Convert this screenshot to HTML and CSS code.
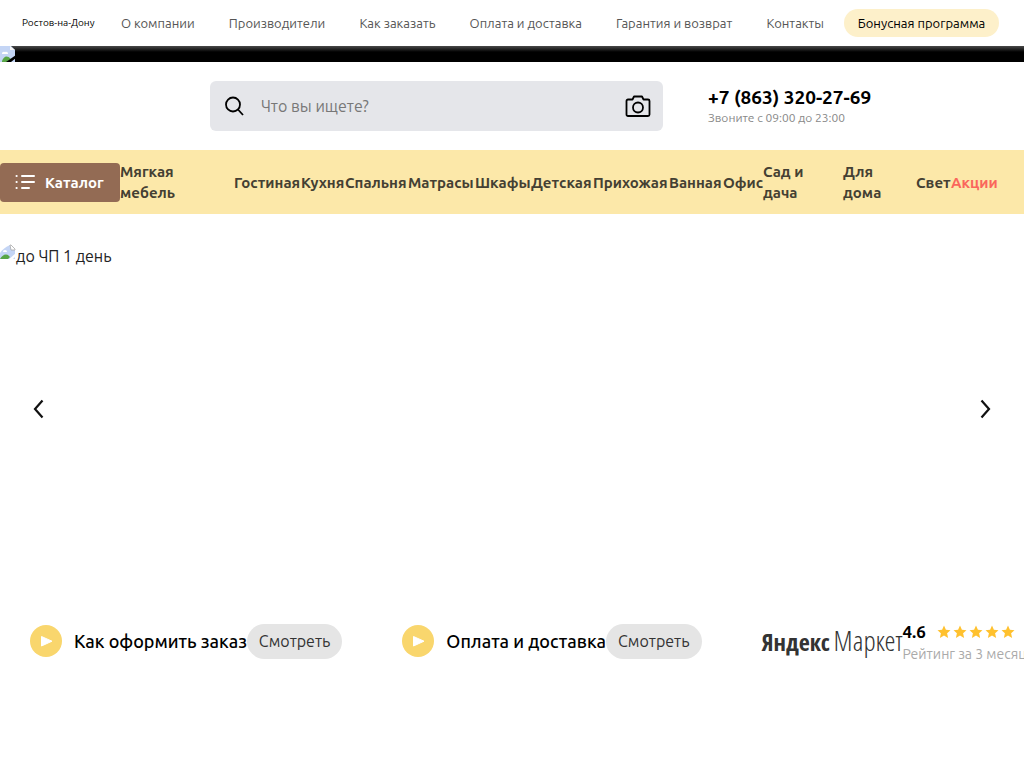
FILE: index.html
```html
<!DOCTYPE html>
<html lang="ru">
<head>
<meta charset="utf-8">
<meta name="viewport" content="width=device-width, initial-scale=1">
<title>Мебель — Ростов-на-Дону</title>
<link rel="stylesheet" href="styles.css">
</head>
<body>
<header>
  <div class="topbar">
    <a class="city" href="#">Ростов-на-Дону</a>
    <nav class="toplinks">
      <a href="#">О компании</a>
      <a href="#">Производители</a>
      <a href="#">Как заказать</a>
      <a href="#">Оплата и доставка</a>
      <a href="#">Гарантия и возврат</a>
      <a href="#">Контакты</a>
    </nav>
    <a class="bonus" href="#">Бонусная программа</a>
  </div>
  <div class="promo">
    <svg class="broken" viewBox="0 0 16 16" aria-hidden="true"><path fill="#c4d5f5" d="M0 0h11l4 4v12H0z"/><path fill="#fff" d="M2 8a2 2 0 0 1 3-2 2 2 0 0 1 3 2z"/><path fill="#58a646" d="M2 15c2-5 5-6 9-2l-4 3H2z"/><path fill="#f5f5f5" d="M10 0l5 4h-5z"/><path fill="#000" d="M6 16L16 9v3l-5 4z"/></svg>
  </div>
  <div class="head">
    <form class="search">
      <button class="iconbtn" type="button" aria-label="Найти"><svg width="20" height="20" viewBox="0 0 20 20" fill="none" stroke="#000" stroke-width="1.800"><circle cx="8" cy="8.500" r="7"/><path d="M13 13.500l5 5.500"/></svg></button>
      <input type="text" placeholder="Что вы ищете?" aria-label="Поиск">
      <button class="iconbtn" type="button" aria-label="Поиск по фото"><svg width="26" height="22" viewBox="0 0 26 22" fill="none" stroke="#000" stroke-width="1.800" stroke-linejoin="round"><path d="M3 4.500h4.500L9 1.500h8l1.500 3H23a1.500 1.500 0 0 1 1.500 1.500V19.500a1.500 1.500 0 0 1-1.500 1.500H3a1.500 1.500 0 0 1-1.500-1.500V6A1.500 1.500 0 0 1 3 4.500z"/><circle cx="13" cy="12.500" r="5"/></svg></button>
    </form>
    <div class="phone">
      <a href="tel:+78633202769">+7 (863) 320-27-69</a>
      <p>Звоните с 09:00 до 23:00</p>
    </div>
  </div>
  <nav class="menu">
    <button class="catalog" type="button"><svg width="20" height="16" viewBox="0 0 20 16" stroke="#fff" stroke-width="2" stroke-linecap="round"><path d="M1.500 2h.2M1.500 8h.2M1.500 14h.2M7 2h12M7 8h12M7 14h7"/></svg>Каталог</button>
    <a class="wraps" href="#">Мягкая мебель</a>
    <a href="#">Гостиная</a>
    <a href="#">Кухня</a>
    <a href="#">Спальня</a>
    <a href="#">Матрасы</a>
    <a href="#">Шкафы</a>
    <a href="#">Детская</a>
    <a href="#">Прихожая</a>
    <a href="#">Ванная</a>
    <a href="#">Офис</a>
    <a class="wraps" href="#">Сад и дача</a>
    <a class="wraps" href="#">Для дома</a>
    <a href="#">Свет</a>
    <a class="sale" href="#">Акции</a>
  </nav>
</header>
<main>
  <section class="slider">
    <a class="slide" href="#"><svg class="broken" viewBox="0 0 16 16" aria-hidden="true"><path fill="#c4d5f5" d="M0 9C2 6 5 3 10 1l5 5v9H0z"/><path fill="#fff" stroke="#aaa" stroke-width=".8" d="M10 1h1l4 4v1h-4z"/><path fill="#fff" d="M3 8a2 2 0 0 1 4 0z"/><path fill="#58a646" d="M0 15c3-5 7-6 10-2l-2 2z"/><path fill="#fff" d="M8 16l8-7v3l-4 4z"/></svg>до ЧП 1 день</a>
    <div class="arrows">
      <button type="button" aria-label="Назад"><svg width="12" height="20" viewBox="0 0 12 20" fill="none" stroke="#111" stroke-width="2.200"><path d="M10.500 1.500L3 10l7.500 8.500"/></svg></button>
      <button type="button" aria-label="Вперёд"><svg width="12" height="20" viewBox="0 0 12 20" fill="none" stroke="#111" stroke-width="2.200"><path d="M1.500 1.500L9 10l-7.500 8.500"/></svg></button>
    </div>
  </section>
  <section class="info">
    <div class="guide">
      <svg class="play" viewBox="0 0 32 32" aria-hidden="true"><circle cx="16" cy="16" r="16" fill="#f9d66d"/><path d="M11.500 11.500v9.500L22 16.200z" fill="#fff" stroke="#fff" stroke-linejoin="round"/></svg>
      <h2>Как оформить заказ</h2>
      <button type="button">Смотреть</button>
    </div>
    <div class="guide">
      <svg class="play" viewBox="0 0 32 32" aria-hidden="true"><circle cx="16" cy="16" r="16" fill="#f9d66d"/><path d="M11.500 11.500v9.500L22 16.200z" fill="#fff" stroke="#fff" stroke-linejoin="round"/></svg>
      <h2>Оплата и доставка</h2>
      <button type="button">Смотреть</button>
    </div>
    <div class="market">
      <div class="logo"><b>Яндекс</b><span>Маркет</span></div>
      <div class="rating">
        <div class="score"><strong>4.6</strong>
          <svg width="78" height="14" viewBox="0 0 78 14" fill="#ffc12e" aria-label="Рейтинг 4.6 из 5"><defs><path id="star" d="M7 0.500l1.900 4.200 4.600.5-3.400 3.100 1 4.600L7 10.600l-4.100 2.300 1-4.600L.5 5.200l4.600-.5z"/></defs><use href="#star"/><use href="#star" x="16"/><use href="#star" x="32"/><use href="#star" x="48"/><use href="#star" x="64"/></svg>
        </div>
        <p>Рейтинг за 3 месяца</p>
      </div>
    </div>
  </section>
</main>
</body>
</html>
```
FILE: styles.css
```css
* { box-sizing: border-box; }
body {
  margin: 0;
  overflow-x: hidden;
  background: #fff;
  color: #000;
  font: 16px/24px Ubuntu, "Noto Sans", sans-serif;
}
a { color: inherit; text-decoration: none; }
p, h2 { margin: 0; }
button { border: 0; padding: 0; background: none; color: inherit; font: inherit; cursor: pointer; }
svg { display: block; flex: none; }
.topbar {
  display: flex;
  align-items: center;
  height: 46px;
  padding: 0 25px 0 22px;
  font-size: 13px;
  white-space: nowrap;
}
.city { width: 99px; font-size: 10px; }
.toplinks { display: flex; flex: 1; justify-content: space-between; margin-right: 20px; color: #555; }
.bonus { width: 155px; border-radius: 14px; background: #fdf0ca; line-height: 28px; text-align: center; }
.promo { height: 16px; background: linear-gradient(#4a4a4a, #000 6px); }
.broken { width: 16px; height: 16px; }
.head {
  display: grid;
  grid-template-columns: 453fr 316fr;
  align-items: center;
  column-gap: 45px;
  height: 88px;
  padding-left: 210px;
}
.search {
  display: flex;
  align-items: center;
  height: 50px;
  padding: 0 12px 0 15px;
  border-radius: 6px;
  background: #e5e6ea;
}
.search input {
  flex: 1;
  min-width: 0;
  padding: 0 16px;
  border: 0;
  outline: 0;
  background: none;
  font: inherit;
}
.search input::placeholder { color: #777; }
.phone a { display: block; font-size: 19px; font-weight: 600; }
.phone p { color: #888; font-size: 12px; line-height: 18px; }
.menu {
  display: grid;
  grid-template-columns: 120px 114fr 67fr 44fr 63fr 67fr 56fr 62fr 76fr 54fr 40fr 80fr 73fr 35fr 48fr;
  align-items: center;
  height: 64px;
  padding-right: 25px;
  background: #fce8a9;
  color: #444033;
  font-size: 15px;
  font-weight: 700;
  line-height: 21px;
}
.menu a { min-width: 0; white-space: nowrap; }
.menu .wraps { padding-right: 30px; white-space: normal; }
.menu .sale { color: #fa665c; }
.catalog {
  display: flex;
  align-items: center;
  gap: 10px;
  height: 39px;
  padding: 0 15px;
  border-radius: 4px;
  background: #936b54;
  color: #fff;
}
.slider { padding-top: 30px; }
.slide { display: flex; align-items: flex-start; color: #222; }
.arrows { display: flex; justify-content: space-between; padding: 131px 32px 0; }
.info {
  display: flex;
  align-items: center;
  gap: 60px;
  padding: 198px 0 0 30px;
  white-space: nowrap;
}
.guide, .market { display: flex; flex: none; align-items: center; }
.play { width: 32px; height: 32px; margin-right: 12px; }
.guide h2 { font-size: 18px; font-weight: 500; }
.guide button {
  height: 35px;
  padding: 0 12px;
  border-radius: 18px;
  background: #e5e5e5;
  color: #333;
  font-size: 16px;
}
.logo {
  display: flex;
  align-items: baseline;
  justify-content: space-between;
  width: 141px;
  color: #333;
  font-family: "Open Sans Condensed", "Noto Sans", sans-serif;
  font-size: 24px;
  line-height: 28px;
}
.logo span {
  font-family: "Open Sans Condensed Light", "Open Sans Light Condensed", "Roboto Condensed Light", sans-serif;
  font-size: 28px;
  font-weight: 300;
}
.rating { padding-top: 4px; }
.score { display: flex; align-items: center; gap: 11px; line-height: 22px; }
.score strong { font-size: 17px; font-weight: 600; }
.rating p { color: #aaa; font-size: 14px; line-height: 22px; }
```
